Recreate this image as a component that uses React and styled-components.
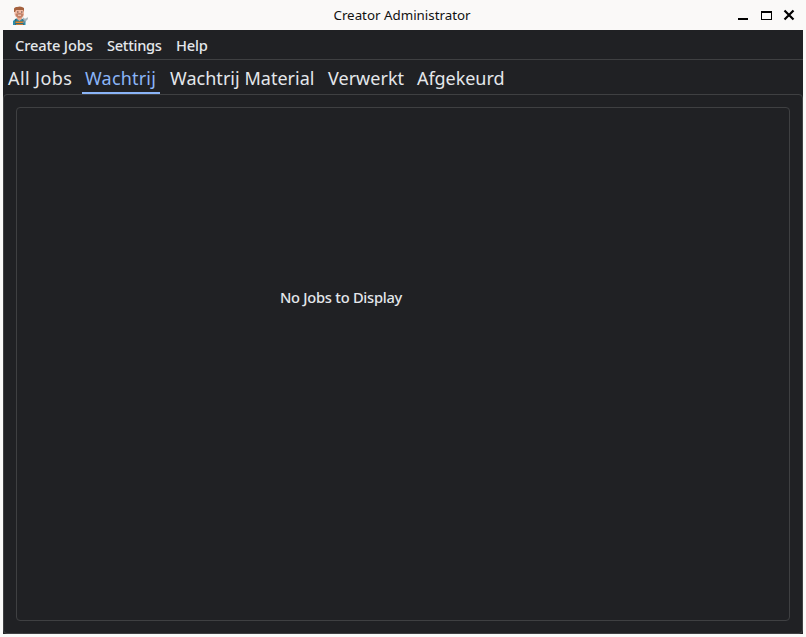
import React from "react";
import styled, { createGlobalStyle } from "styled-components";

const GlobalStyle = createGlobalStyle`
  * { box-sizing: border-box; }
  body { margin: 0; background: #faf9f8; overflow: hidden; }
`;

const Window = styled.div`
  width: 806px;
  height: 637px;
  display: flex;
  flex-direction: column;
  padding: 0 3px 3px;
  background: #faf9f8;
  color: #e4e7eb;
  font-family: "Noto Sans", sans-serif;
  white-space: nowrap;
`;

const TitleBar = styled.header`
  height: 30px;
  flex: none;
  display: grid;
  grid-template-columns: 80px 1fr 80px;
  align-items: center;
  color: #111;
`;

const AppIcon = styled.svg`
  display: block;
  margin: 1px 0 0 9px;
`;

const Title = styled.h1`
  margin: 0 0 0 -2px;
  text-align: center;
  font-size: 13.33px;
  font-weight: 400;
  line-height: 30px;
`;

const Controls = styled.div`
  display: flex;
  margin-left: 14px;
`;

const Body = styled.div`
  flex: 1;
  display: flex;
  flex-direction: column;
  background: #202124;
`;

const MenuBar = styled.nav`
  height: 30px;
  flex: none;
  display: flex;
  padding-left: 12px;
  border-bottom: 1px solid #3f4042;
`;

const MenuItem = styled.span`
  width: ${(p) => p.$width}px;
  font-size: 14.67px;
  font-weight: 500;
  letter-spacing: ${(p) => p.$spacing}px;
  line-height: 31px;
`;

const TabBar = styled.div`
  height: 34px;
  flex: none;
  display: flex;
  padding: 0 0 0 2px;
`;

const Tab = styled.span`
  width: ${(p) => p.$width}px;
  height: 34px;
  padding-left: 3px;
  margin-right: ${(p) => p.$gap}px;
  font-size: 18px;
  font-weight: 450;
  letter-spacing: ${(p) => p.$spacing}px;
  line-height: 37px;
  color: ${(p) => (p.$active ? "#8ab4f7" : "inherit")};
  border-bottom: 2px solid ${(p) => (p.$active ? "#8ab4f7" : "transparent")};
`;

const Pane = styled.main`
  flex: 1;
  display: flex;
  padding: 12px;
  border: 1px solid #3f4042;
  border-radius: 4px;
`;

const JobList = styled.section`
  flex: 1;
  border: 1px solid #3f4042;
  border-radius: 4px;
  padding: 178px 0 0 263px;
`;

const Message = styled.p`
  margin: 0;
  font-size: 14.67px;
  font-weight: 500;
  letter-spacing: -0.26px;
  line-height: 22px;
`;

const tabs = [
  { label: "All Jobs", width: 71, gap: 6, spacing: 0.4 },
  { label: "Wachtrij", width: 78, gap: 7, active: true, spacing: 0.2 },
  { label: "Wachtrij Material", width: 152, gap: 6, spacing: 0.03 },
  { label: "Verwerkt", width: 83, gap: 6, spacing: 0.03 },
  { label: "Afgekeurd", width: 94, gap: 0, spacing: -0.06 },
];

const menus = [
  { label: "Create Jobs", width: 92, spacing: -0.14 },
  { label: "Settings", width: 69, spacing: -0.3 },
  { label: "Help", width: 50, spacing: -0.2 },
];

export default function App() {
  return (
    <>
      <GlobalStyle />
      <Window>
        <TitleBar>
          <AppIcon width="17" height="20" viewBox="0 0 17 20">
            <path d="M1 19v-4l3-2.500h6l3.500 2.500v4z" fill="#2b8eac" />
            <path d="M5 10h5v3l-2.500 2L5 13z" fill="#e9aa91" />
            <path d="M2.500 4q0-2 4.500-2t5 2v4q0 4-4.500 4T2.500 8z" fill="#f0b9a2" />
            <path d="M2 6V2.500Q3 .5 5 1q4-1.500 7 1V6l-1-2H4L3 6z" fill="#a5623f" />
            <path d="M3.500 8q4-2 8 0-.5 4-4 4t-4-4z" fill="#c28268" />
            <path d="M6 8.700h3v1H6z" fill="#f7ded5" />
            <path d="M5 5.500h1.500v1H5zM9 5.500h1.500v1H9z" fill="#5c4440" />
            <path d="M3 13h1.500v2h6v-2H12v6H3z" fill="#336b78" />
            <path d="M3.500 15.500h8v1.500h-8z" fill="#e78a2b" />
            <path d="M4 18h7v1H4z" fill="#c77b38" />
            <path d="M11 17l2.500-3" stroke="#7c929c" strokeWidth="1.500" />
            <path d="M10.500 11l2 1.500h1.500l1.500-1.500.5 2-2 2-2.500-.5z" fill="#a7b7bd" />
          </AppIcon>
          <Title>Creator Administrator</Title>
          <Controls>
            <svg width="66" height="30" viewBox="0 0 66 30">
              <path d="M1 18h10v2H1z" fill="#000" />
              <path d="M24 11h11v9H24zM25 13v6h9v-6z" fill="#000" fillRule="evenodd" />
              <path d="M47.500 10.500l9 9m0-9l-9 9" stroke="#000" strokeWidth="2.200" fill="none" />
            </svg>
          </Controls>
        </TitleBar>
        <Body>
          <MenuBar>
            {menus.map((m) => (
              <MenuItem key={m.label} $width={m.width} $spacing={m.spacing}>{m.label}</MenuItem>
            ))}
          </MenuBar>
          <TabBar>
            {tabs.map((t) => (
              <Tab key={t.label} $width={t.width} $gap={t.gap} $active={t.active} $spacing={t.spacing}>{t.label}</Tab>
            ))}
          </TabBar>
          <Pane>
            <JobList>
              <Message>No Jobs to Display</Message>
            </JobList>
          </Pane>
        </Body>
      </Window>
    </>
  );
}
